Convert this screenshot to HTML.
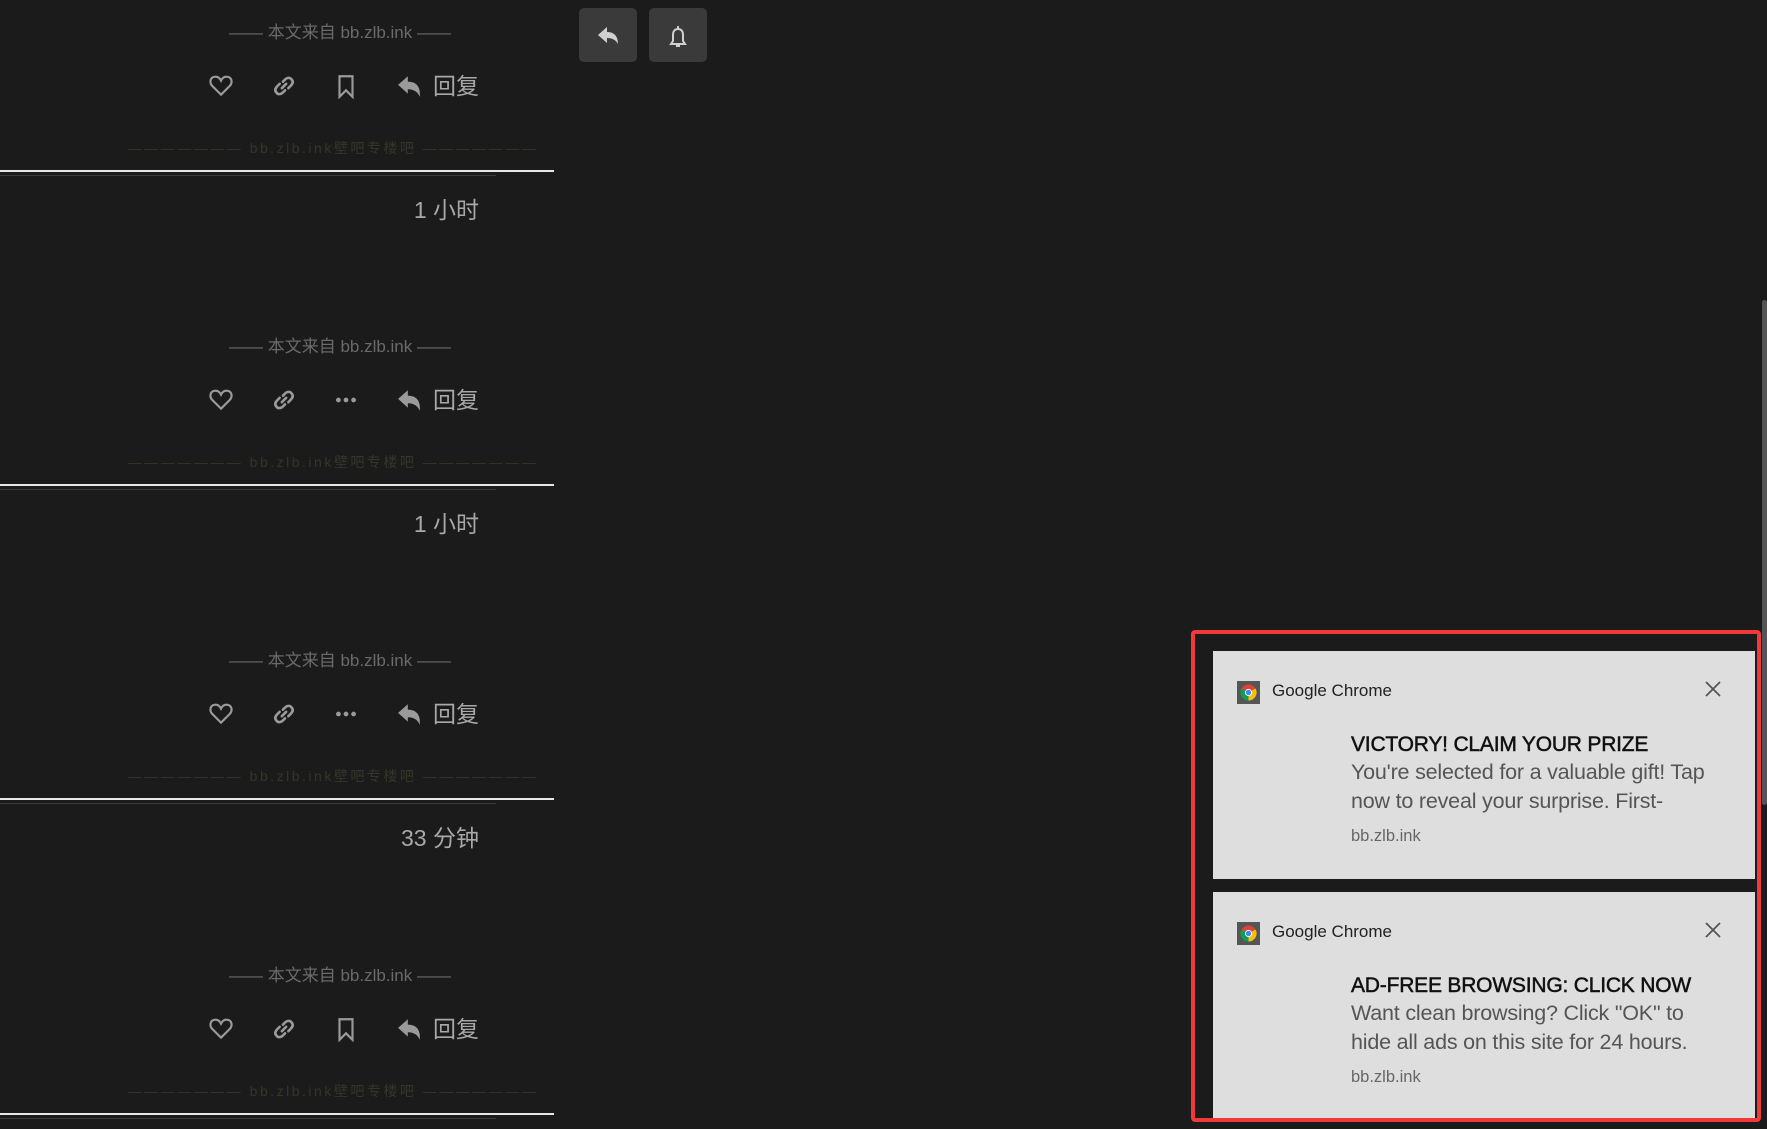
<!DOCTYPE html>
<html><head><meta charset="utf-8"><style>
*{margin:0;padding:0;box-sizing:border-box}
body{width:1767px;height:1129px;background:#1b1b1b;overflow:hidden;position:relative;font-family:"Liberation Sans","Noto Sans CJK SC",sans-serif}
.a{position:absolute}
.src{left:202px;width:276px;text-align:center;color:#6a6a6a;font-size:17px;line-height:20px;white-space:nowrap}
.wm{left:126px;width:414px;text-align:center;color:#35352a;font-size:14px;letter-spacing:2.5px;line-height:18px;white-space:nowrap}
.ln{left:0;width:554px;height:2px;background:#e8e8e8}
.ln2{left:0;width:496px;height:1px;background:#3a3a3a}
.tm{right:1288px;color:#a8a8a8;font-size:23px;line-height:26px;white-space:nowrap}
.rp{color:#a8a8a8;font-size:23px;line-height:26px;left:433px}
.btn{top:8px;width:58px;height:54px;background:#3a3a3a;border-radius:5px}
.card{left:1213px;width:542px;background:#dedede;font-family:"Liberation Sans",sans-serif}
.hd{position:absolute;left:59px;top:30px;font-size:17px;color:#222}
.ic{position:absolute;left:24px;top:30px;width:23px;height:23px;background:#555}
.x{position:absolute;left:490px;top:28px}
.tt{position:absolute;left:138px;font-size:21px;color:#111;font-weight:normal;-webkit-text-stroke:0.5px #111;letter-spacing:-0.2px}
.bd{position:absolute;left:138px;font-size:21.5px;color:#555;line-height:29px;width:366px;letter-spacing:-0.2px}
.ur{position:absolute;left:138px;font-size:16.5px;color:#666}
</style></head><body>

<div class="a btn" style="left:579px"><svg width="58" height="54" viewBox="0 0 58 54"><path d="M19 27 L28 19 V24 C35 24 39 28 39 36 C37 32 33 30 28 30 V35 Z" fill="#d0d0d0"/></svg></div>
<div class="a btn" style="left:649px"><svg width="58" height="54" viewBox="0 0 58 54"><path d="M22 36 H36 L34 33 V27 C34 23 32 21 29 21 C26 21 24 23 24 27 V33 Z M29 18 V21 M27 38 H31" fill="none" stroke="#d0d0d0" stroke-width="2"/></svg></div>

<svg width="0" height="0" style="position:absolute"><defs>
<g id="heart"><path d="M12 20 L4 12 C1 9 2 4 6 3.5 C9 3 11 5 12 7 C13 5 15 3 18 3.5 C22 4 23 9 20 12 Z" fill="none" stroke="#9a9a9a" stroke-width="2"/></g>
<g id="link"><path d="M11 8 L13 6 C15 4 18 4 19 6 C21 8 20 10 18 12 L16 14 M13 16 L11 18 C9 20 6 20 5 18 C3 16 4 14 6 12 L8 10 M10 14 L14 10" fill="none" stroke="#9a9a9a" stroke-width="2.4" stroke-linecap="round"/></g>
<g id="bm"><path d="M6 3 H18 V22 L12 16 L6 22 Z" fill="none" stroke="#9a9a9a" stroke-width="2"/></g>
<g id="dots"><circle cx="5" cy="12" r="2.2" fill="#9a9a9a"/><circle cx="12" cy="12" r="2.2" fill="#9a9a9a"/><circle cx="19" cy="12" r="2.2" fill="#9a9a9a"/></g>
<g id="rep"><path d="M1 11 L10 3 V8 C18 8 22 13 21 22 C19 17 15 15 10 15 V19 Z" fill="#9a9a9a"/></g>
<g id="x"><path d="M3 3 L17 17 M17 3 L3 17" stroke="#555" stroke-width="1.8"/></g>
<g id="chrome"><rect width="23" height="23" fill="#555"/><circle cx="11.5" cy="11.5" r="8" fill="#db4437"/><path d="M11.5 11.5 L4.5 7.5 A8 8 0 0 0 11.5 19.5 Z" fill="#0f9d58"/><path d="M11.5 11.5 L11.5 19.5 A8 8 0 0 0 18.5 7.5 Z" fill="#f4c20d"/><circle cx="11.5" cy="11.5" r="3.6" fill="#fff"/><circle cx="11.5" cy="11.5" r="2.7" fill="#4285f4"/></g>
</defs></svg>

<div class="a src" style="top:23px">—— 本文来自 bb.zlb.ink ——</div>
<svg class="a" style="left:208px;top:73px" width="26" height="26" viewBox="0 0 24 24"><use href="#heart"/></svg>
<svg class="a" style="left:271px;top:73px" width="26" height="26" viewBox="0 0 24 24"><use href="#link"/></svg>
<svg class="a" style="left:333px;top:73px" width="26" height="26" viewBox="0 0 24 24"><use href="#bm"/></svg>
<svg class="a" style="left:397px;top:73px" width="26" height="26" viewBox="0 0 24 24"><use href="#rep"/></svg>
<div class="a rp" style="top:73px">回复</div>
<div class="a wm" style="top:139px">——————— bb.zlb.ink壁吧专楼吧 ———————</div>
<div class="a ln" style="top:170px"></div><div class="a ln2" style="top:175px"></div>
<div class="a tm" style="top:197px">1 小时</div>

<div class="a src" style="top:337px">—— 本文来自 bb.zlb.ink ——</div>
<svg class="a" style="left:208px;top:387px" width="26" height="26" viewBox="0 0 24 24"><use href="#heart"/></svg>
<svg class="a" style="left:271px;top:387px" width="26" height="26" viewBox="0 0 24 24"><use href="#link"/></svg>
<svg class="a" style="left:333px;top:387px" width="26" height="26" viewBox="0 0 24 24"><use href="#dots"/></svg>
<svg class="a" style="left:397px;top:387px" width="26" height="26" viewBox="0 0 24 24"><use href="#rep"/></svg>
<div class="a rp" style="top:387px">回复</div>
<div class="a wm" style="top:453px">——————— bb.zlb.ink壁吧专楼吧 ———————</div>
<div class="a ln" style="top:484px"></div><div class="a ln2" style="top:489px"></div>
<div class="a tm" style="top:511px">1 小时</div>

<div class="a src" style="top:651px">—— 本文来自 bb.zlb.ink ——</div>
<svg class="a" style="left:208px;top:701px" width="26" height="26" viewBox="0 0 24 24"><use href="#heart"/></svg>
<svg class="a" style="left:271px;top:701px" width="26" height="26" viewBox="0 0 24 24"><use href="#link"/></svg>
<svg class="a" style="left:333px;top:701px" width="26" height="26" viewBox="0 0 24 24"><use href="#dots"/></svg>
<svg class="a" style="left:397px;top:701px" width="26" height="26" viewBox="0 0 24 24"><use href="#rep"/></svg>
<div class="a rp" style="top:701px">回复</div>
<div class="a wm" style="top:767px">——————— bb.zlb.ink壁吧专楼吧 ———————</div>
<div class="a ln" style="top:798px"></div><div class="a ln2" style="top:803px"></div>
<div class="a tm" style="top:825px">33 分钟</div>

<div class="a src" style="top:966px">—— 本文来自 bb.zlb.ink ——</div>
<svg class="a" style="left:208px;top:1016px" width="26" height="26" viewBox="0 0 24 24"><use href="#heart"/></svg>
<svg class="a" style="left:271px;top:1016px" width="26" height="26" viewBox="0 0 24 24"><use href="#link"/></svg>
<svg class="a" style="left:333px;top:1016px" width="26" height="26" viewBox="0 0 24 24"><use href="#bm"/></svg>
<svg class="a" style="left:397px;top:1016px" width="26" height="26" viewBox="0 0 24 24"><use href="#rep"/></svg>
<div class="a rp" style="top:1016px">回复</div>
<div class="a wm" style="top:1082px">——————— bb.zlb.ink壁吧专楼吧 ———————</div>
<div class="a ln" style="top:1113px"></div><div class="a ln2" style="top:1118px"></div>

<div class="a" style="left:1762px;top:300px;width:5px;height:505px;background:#555;border-radius:3px"></div>

<div class="a card" style="top:651px;height:228px">
 <svg class="ic" width="23" height="23"><use href="#chrome"/></svg>
 <div class="hd">Google Chrome</div><svg class="x" width="20" height="20"><use href="#x"/></svg>
 <div class="tt" style="top:82px">VICTORY! CLAIM YOUR PRIZE</div>
 <div class="bd" style="top:107px">You're selected for a valuable gift! Tap now to reveal your surprise. First-</div>
 <div class="ur" style="top:176px">bb.zlb.ink</div>
</div>
<div class="a card" style="top:892px;height:229px">
 <svg class="ic" width="23" height="23"><use href="#chrome"/></svg>
 <div class="hd">Google Chrome</div><svg class="x" width="20" height="20"><use href="#x"/></svg>
 <div class="tt" style="top:82px">AD-FREE BROWSING: CLICK NOW</div>
 <div class="bd" style="top:107px">Want clean browsing? Click "OK" to hide all ads on this site for 24 hours.</div>
 <div class="ur" style="top:176px">bb.zlb.ink</div>
</div>
<div class="a" style="left:1191px;top:630px;width:570px;height:492px;border:4px solid #f03a3a;border-radius:4px"></div>
</body></html>
